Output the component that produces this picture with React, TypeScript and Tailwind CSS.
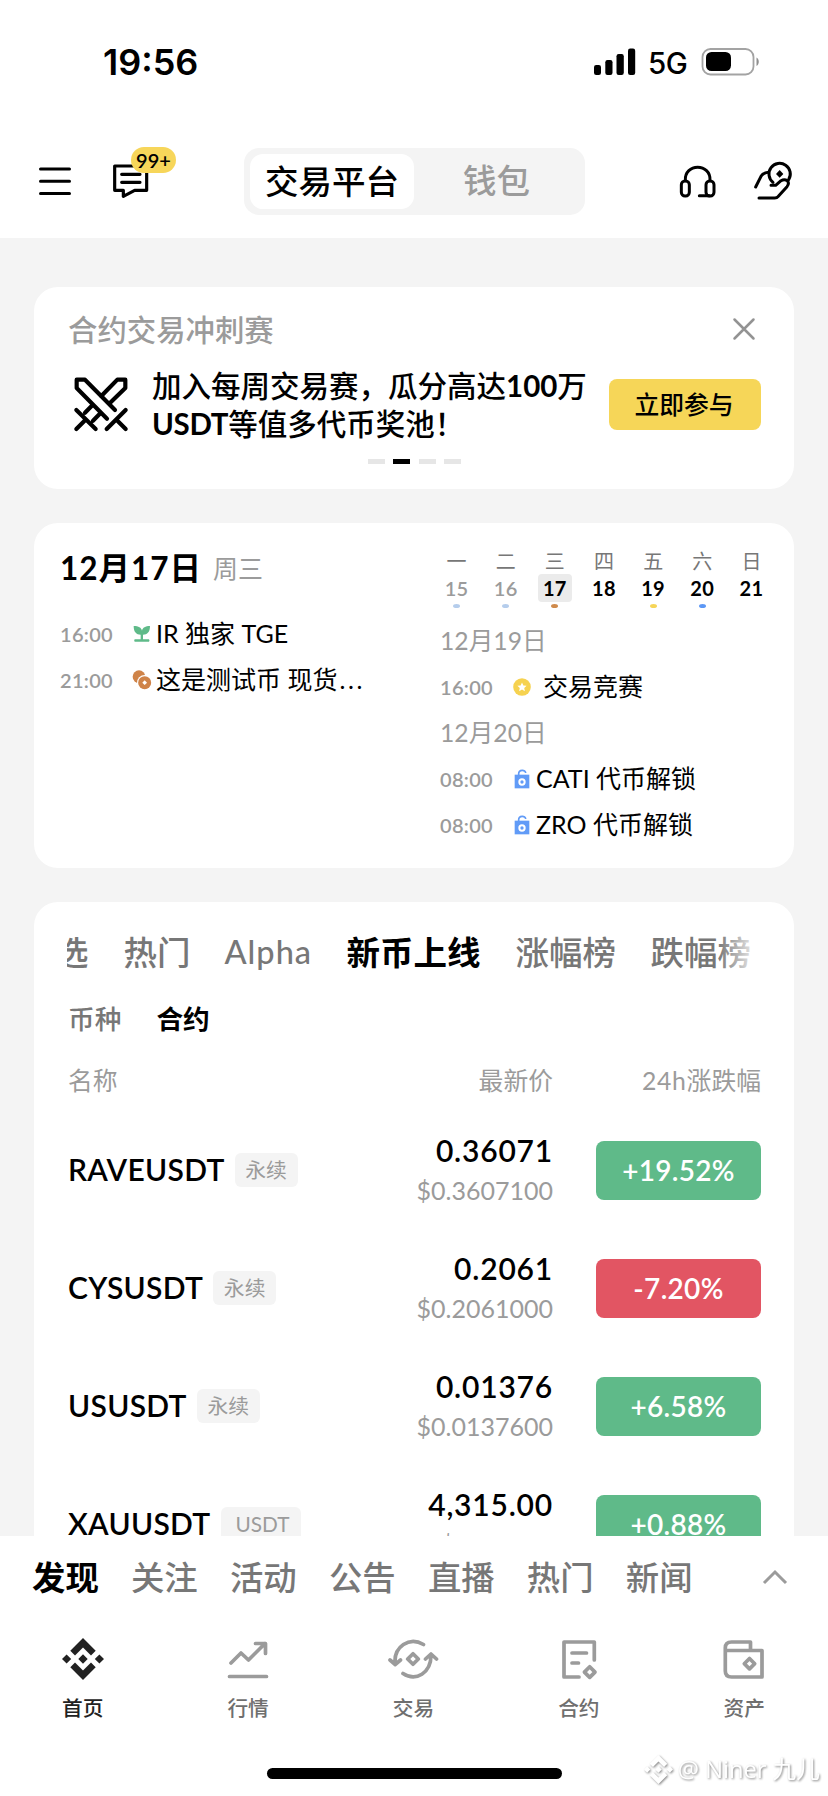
import React from "react";

const days = [
  { d: "一", n: "15", past: true, dot: "bg-[#b5cdec]" },
  { d: "二", n: "16", past: true, dot: "bg-[#b5cdec]" },
  { d: "三", n: "17", today: true, dot: "bg-[#cf8a4c]" },
  { d: "四", n: "18", dot: "bg-transparent" },
  { d: "五", n: "19", dot: "bg-[#f6d558]" },
  { d: "六", n: "20", dot: "bg-[#5c97f5]" },
  { d: "日", n: "21", dot: "bg-transparent" },
];

const pairs = [
  { name: "RAVEUSDT", tag: "永续", tagClass: "w-[63px]", price: "0.36071", usd: "$0.3607100", change: "+19.52%", up: true },
  { name: "CYSUSDT", tag: "永续", tagClass: "w-[63px]", price: "0.2061", usd: "$0.2061000", change: "-7.20%", up: false },
  { name: "USUSDT", tag: "永续", tagClass: "w-[63px]", price: "0.01376", usd: "$0.0137600", change: "+6.58%", up: true },
  { name: "XAUUSDT", tag: "USDT", tagClass: "w-[80px] pl-1", price: "4,315.00", usd: "$4,315.00", change: "+0.88%", up: true },
];

function StatusBar() {
  return (
    <div className="flex h-[124px] items-start justify-between pl-[103px] pr-[68px] pt-[42px] font-['Inter',sans-serif]">
      <span className="text-[36px] leading-[40px] font-semibold">19:56</span>
      <div className="flex items-start">
        <svg className="mt-[6px] h-[28px] w-[42px]" viewBox="0 0 42 28">
          <rect x="0" y="17" width="7" height="10" rx="2.2" />
          <rect x="11.3" y="12" width="7.2" height="15" rx="2.2" />
          <rect x="22.5" y="6" width="7.3" height="21" rx="2.2" />
          <rect x="34" y="0.5" width="7.2" height="26.5" rx="2.2" />
        </svg>
        <span className="ml-[12px] mt-[1px] w-[40px] text-[29.5px] leading-[40px] font-medium tracking-[-0.4px]">5G</span>
        <svg className="ml-[13px] mt-[5px] h-[30px] w-[59px]" viewBox="0 0 59 30">
          <rect x="1.5" y="2" width="51" height="25.5" rx="8" fill="none" stroke="#a3a3a3" strokeWidth="1.8" />
          <rect x="5" y="5" width="25" height="19" rx="5.5" />
          <path d="M55.5 10.5C58.5 12 58.5 17.5 55.5 19Z" fill="#8f8f8f" />
        </svg>
      </div>
    </div>
  );
}

function Header() {
  return (
    <header className="h-[238px] bg-white">
      <StatusBar />
      <div className="flex h-[91px] items-start pl-[39px] pt-[24px]">
        <svg className="mt-[18px] h-[30px] w-[32px]" viewBox="0 0 32 30" stroke="black" strokeWidth="3" strokeLinecap="round">
          <path d="M1.5 3H30.5M1.5 15.3H30.5M1.5 27.4H30.5" />
        </svg>
        <div className="relative ml-[41px] mt-[16px] h-[34px] w-[38px]">
          <svg className="h-[34px] w-[38px]" viewBox="336 492 114 102" fill="none" stroke="black" strokeWidth="9.5" strokeLinecap="round" strokeLinejoin="round">
            <path d="M440 510V571H404L370 589V571H344V498H400M365 523H420M365 547H420" />
          </svg>
          <span className="absolute left-[19px] top-[-17px] flex h-[26px] w-[45px] items-center justify-center rounded-full bg-[#f7d65a] text-[20px] leading-[26px] font-semibold">
            99+
          </span>
        </div>
        <div className="ml-[94px] flex h-[67px] w-[341px] items-center rounded-[15px] bg-[#f4f4f4] pl-[6px]">
          <div className="flex h-[55px] w-[164px] items-center justify-center rounded-[13px] bg-white pb-[2px] text-[33.5px] leading-[40px] font-medium">交易平台</div>
          <div className="ml-[1px] flex h-[55px] w-[163px] items-center justify-center pb-[4px] text-[33.5px] leading-[40px] font-medium text-[#9b9b9b]">钱包</div>
        </div>
        <svg className="ml-[94px] mt-[16px] h-[36px] w-[38px]" viewBox="794 492 114 108" fill="none" stroke="black" strokeWidth="9" strokeLinecap="round">
          <rect x="801" y="543" width="24" height="45" rx="11" />
          <rect x="875" y="543" width="24" height="45" rx="11" />
          <path d="M813 542C809 488 891 488 887 542M855 587H885" />
        </svg>
        <svg className="ml-[36px] mt-[13px] h-[40px] w-[40px]" viewBox="1018 484 120 120" fill="none" stroke="black" strokeWidth="9" strokeLinecap="round" strokeLinejoin="round">
          <path d="M1078 548A32 32 0 1 1 1125 540" />
          <path d="M1098 511L1109 523L1098 534L1087 523Z" fill="black" stroke="none" />
          <path d="M1026 562L1042 530Q1049 519 1065 518M1072 557H1086L1102 543Q1112 537 1121 543Q1128 551 1120 561L1094 590Q1090 595 1083 595H1036" />
        </svg>
      </div>
    </header>
  );
}

function Swords() {
  return (
    <svg className="h-[56px] w-[56px]" viewBox="160 318 168 168" fill="none" stroke="black" strokeWidth="12.5" strokeLinecap="round" strokeLinejoin="round">
      <path d="M286 420L196 329H171V354L262 446M318 420L261 477M291 450L318 477" />
      <path d="M245 378L293 329H317V354L270 400M218 406L196 428M242 430L220 452M170 420L228 477M197 450L170 477" />
    </svg>
  );
}

function Banner() {
  return (
    <section className="mt-[49px] flex h-[202px] flex-col rounded-[24px] bg-white pl-[34px] pr-[33px]">
      <div className="flex h-[86px] items-center justify-between pr-[5px]">
        <span className="text-[29.4px] leading-[40px] font-medium text-[#9b9b9b]">合约交易冲刺赛</span>
        <svg className="mb-[2px] h-[24px] w-[24px]" viewBox="0 0 24 24" stroke="#939393" strokeWidth="2.5" strokeLinecap="round">
          <path d="M2.5 2.5L21.5 21.5M21.5 2.5L2.5 21.5" />
        </svg>
      </div>
      <div className="flex h-[76px] items-start">
        <div className="ml-[5px] mt-[3px]">
          <Swords />
        </div>
        <p className="ml-[23px] mt-[-6px] w-[456px] whitespace-nowrap text-[29.5px] leading-[38px] font-medium">
          加入每周交易赛，瓜分高达<span className="font-bold">100</span>万
          <br />
          <span className="font-bold tracking-[-0.3px]">USDT</span>等值多代币奖池！
        </p>
        <button className="ml-auto mt-[6px] h-[51px] w-[152px] rounded-[8px] bg-[#f6d658] pr-[2px] text-[24.8px] leading-[50px] font-medium">立即参与</button>
      </div>
      <div className="mt-[10px] flex gap-[8.3px] pl-[300px]">
        <i className="h-[4.5px] w-[17px] bg-[#e6e6e6]" />
        <i className="h-[4.5px] w-[17px] bg-black" />
        <i className="h-[4.5px] w-[17px] bg-[#e6e6e6]" />
        <i className="h-[4.5px] w-[17px] bg-[#e6e6e6]" />
      </div>
    </section>
  );
}

function Sprout() {
  return (
    <svg className="h-[18px] w-[18px]" viewBox="337 347 54 54" fill="#5fba89">
      <path d="M339 350C354 350 362 355 364 364C366 355 374 350 388 350C388 368 380 376 367 376V390H385Q388 394 385 397H342Q339 394 342 390H360V376C347 376 339 368 339 350Z" />
    </svg>
  );
}

function Coins() {
  return (
    <svg className="h-[20px] w-[20px]" viewBox="334 485 60 60">
      <circle cx="355" cy="505" r="19" fill="#cf8348" />
      <circle cx="372" cy="523" r="23" fill="white" />
      <circle cx="372" cy="523" r="19.5" fill="#cf8348" />
      <path d="M372 516L379 523L372 530L365 523Z" fill="white" />
    </svg>
  );
}

function StarCoin() {
  return (
    <svg className="h-[18px] w-[18px]" viewBox="0 0 18 18">
      <circle cx="9" cy="9" r="8.8" fill="#f6d250" />
      <path d="M9 4.4L10.4 7.5L13.6 7.8L11.2 10L11.9 13.2L9 11.6L6.1 13.2L6.8 10L4.4 7.8L7.6 7.5Z" fill="white" />
    </svg>
  );
}

function Unlock() {
  return (
    <svg className="h-[20px] w-[16px]" viewBox="299 778 48 60">
      <path d="M313 796V792C313 779 334 779 334 790" fill="none" stroke="#619bf7" strokeWidth="5" />
      <path d="M301 795H345V836H301Z" fill="#619bf7" />
      <circle cx="323" cy="817" r="8" fill="#619bf7" stroke="white" strokeWidth="6" />
    </svg>
  );
}

function Event({ time, icon, children }: { time: string; icon: React.ReactNode; children: React.ReactNode }) {
  return (
    <div className="flex h-[46px] items-center">
      <span className="w-[72px] text-[20px] leading-[24px] font-semibold tracking-[0.3px] text-[#9b9b9b]">{time}</span>
      <span className="flex w-[20px] justify-center">{icon}</span>
      <span className="mt-[-2px] whitespace-nowrap text-[25px] leading-[34px]">{children}</span>
    </div>
  );
}

function Calendar() {
  return (
    <section className="mt-[34px] flex h-[345px] rounded-[24px] bg-white">
      <div className="w-[379px] pl-[26px] pt-[25px]">
        <div className="flex h-[40px] items-center">
          <span className="text-[31.5px] leading-[40px] font-bold tracking-[1px]">12月17日</span>
          <span className="ml-[11px] text-[25px] leading-[40px] text-[#9b9b9b]">周三</span>
        </div>
        <div className="mt-[23px] flex flex-col">
          <Event time="16:00" icon={<Sprout />}>
            <span className="ml-[4px]">IR 独家 TGE</span>
          </Event>
          <Event time="21:00" icon={<Coins />}>
            <span className="ml-[4px]">
              这是测试币 现货<span className="ml-[2px] tracking-[2.6px]">...</span>
            </span>
          </Event>
        </div>
      </div>
      <div className="flex-1 pt-[26px]">
        <div className="ml-[19px] grid w-[344px] grid-cols-7">
          {days.map((x) => (
            <div key={x.n} className="flex flex-col items-center">
              <span className="text-[20px] leading-[24px] text-[#777]">{x.d}</span>
              <span
                className={
                  "mt-[1px] flex h-[28px] w-[34px] items-center justify-center rounded-[4px] text-[20px] leading-[28px] tracking-[0.3px] " +
                  (x.past ? "font-semibold text-[#9b9b9b]" : x.today ? "bg-[#ebebeb] font-bold" : "font-bold")
                }
              >
                {x.n}
              </span>
              <i className={"mt-[2px] h-[4px] w-[7px] rounded-[50%] " + x.dot} />
            </div>
          ))}
        </div>
        <div className="mt-[10px] flex flex-col pl-[27px]">
          <div className="flex h-[46px] items-center text-[24.7px] leading-[34px] text-[#9b9b9b]">12月19日</div>
          <Event time="16:00" icon={<StarCoin />}>
            <span className="ml-[11px]">交易竞赛</span>
          </Event>
          <div className="flex h-[46px] items-center text-[24.7px] leading-[34px] text-[#9b9b9b]">12月20日</div>
          <Event time="08:00" icon={<Unlock />}>
            <span className="ml-[4px]">CATI 代币解锁</span>
          </Event>
          <Event time="08:00" icon={<Unlock />}>
            <span className="ml-[4px]">ZRO 代币解锁</span>
          </Event>
        </div>
      </div>
    </section>
  );
}

function Market() {
  return (
    <section className="mt-[34px] h-[634px] overflow-hidden rounded-t-[24px] bg-white">
      <div className="relative ml-[33px] mt-[29px] flex w-[685px] overflow-hidden whitespace-nowrap text-[33.5px] leading-[42px] font-medium text-[#777]">
        <span className="ml-[-12px] mr-[35px] shrink-0">选</span>
        <span className="w-[101px] shrink-0">热门</span>
        <span className="w-[122px] shrink-0 text-[32.5px] tracking-[1px]">Alpha</span>
        <span className="w-[169px] shrink-0 font-bold text-black">新币上线</span>
        <span className="w-[135px] shrink-0">涨幅榜</span>
        <span className="shrink-0">跌幅榜</span>
        <i className="absolute right-0 top-0 h-full w-[34px] bg-gradient-to-r from-white/0 to-white/80" />
      </div>
      <div className="mt-[29px] flex gap-[35px] pl-[34px] text-[26.7px] leading-[34px] font-medium">
        <span className="text-[#777]">币种</span>
        <span className="font-bold">合约</span>
      </div>
      <div className="mt-[29px] flex pl-[34px] pr-[33px] text-[24.8px] leading-[32px] text-[#9b9b9b]">
        <span>名称</span>
        <span className="ml-auto">最新价</span>
        <span className="w-[208px] text-right">
          <span className="tracking-[0.7px]">24h</span>涨跌幅
        </span>
      </div>
      <div className="mt-[14px]">
        {pairs.map((p) => (
          <div key={p.name} className="flex h-[118px] items-center pl-[34px] pr-[33px]">
            <span className="mt-[-3px] text-[30px] leading-[36px] font-semibold tracking-[0.3px]">{p.name}</span>
            <span className={"ml-[10px] flex h-[34px] items-center justify-center rounded-[6px] bg-[#f4f4f4] text-[20.8px] leading-[34px] text-[#9b9b9b] " + p.tagClass}>{p.tag}</span>
            <div className="ml-auto flex flex-col text-right">
              <span className="text-[30px] leading-[38px] font-semibold tracking-[0.8px]">{p.price}</span>
              <span className="mt-[2px] text-[25px] leading-[38px] text-[#9b9b9b]">{p.usd}</span>
            </div>
            <span
              className={
                "ml-[43px] flex h-[59px] w-[165px] items-center justify-center rounded-[8px] text-[28px] leading-[58px] font-semibold tracking-[0.3px] text-white " +
                (p.up ? "bg-[#5fba89]" : "bg-[#e25563]")
              }
            >
              {p.change}
            </span>
          </div>
        ))}
      </div>
    </section>
  );
}

function BinanceMark({ className }: { className: string }) {
  return (
    <svg className={className} viewBox="0 0 42 42" fill="currentColor">
      <path d="M21 0L33.7 12.8L29 17.4L21 9.4L13 17.4L8.3 12.8ZM21 42L33.7 29.2L29 24.6L21 32.6L13 24.6L8.3 29.2Z" />
      <path d="M0 21L4.6 16.4L9.2 21L4.6 25.6ZM32.8 21L37.4 16.4L42 21L37.4 25.6ZM16.3 21L21 16.3L25.7 21L21 25.7Z" />
    </svg>
  );
}

function NavItem({ label, active, children }: { label: string; active?: boolean; children: React.ReactNode }) {
  return (
    <div className={"flex w-[165.4px] flex-col items-center " + (active ? "text-[#222]" : "text-[#9b9b9b]")}>
      <div className="flex h-[48px] items-center justify-center">{children}</div>
      <span className={"mt-[10px] text-[20.7px] leading-[30px] font-medium " + (active ? "" : "text-[#6f6f6f]")}>{label}</span>
    </div>
  );
}

const line = {
  fill: "none",
  stroke: "currentColor",
  strokeWidth: 3.7,
  strokeLinecap: "round" as const,
  strokeLinejoin: "round" as const,
};

function Footer() {
  return (
    <footer className="relative h-[260px] bg-white">
      <div className="flex h-[81px] items-center gap-[32.2px] pl-[32px] pr-[40px] text-[33.4px] leading-[42px] font-medium text-[#777]">
        <span className="font-bold text-black">发现</span>
        <span>关注</span>
        <span>活动</span>
        <span>公告</span>
        <span>直播</span>
        <span>热门</span>
        <span>新闻</span>
        <svg className="ml-auto h-[18px] w-[26px]" viewBox="0 0 26 18" fill="none" stroke="#9b9b9b" strokeWidth="3">
          <path d="M2 15L13 4L24 15" />
        </svg>
      </div>
      <nav className="mt-[18px] flex">
        <NavItem label="首页" active>
          <BinanceMark className="h-[42px] w-[42px]" />
        </NavItem>
        <NavItem label="行情">
          <svg className="h-[48px] w-[48px]" viewBox="0 0 48 48" {...line}>
            <path d="M7 28L17 18L24.5 25L41 8.5M31.5 8.5H41.5V18.5M5.5 41.5H42.5" />
          </svg>
        </NavItem>
        <NavItem label="交易">
          <svg className="h-[48px] w-[52px]" viewBox="0 0 52 48" {...line}>
            <path d="M8 28C7 12 22 1 36.5 9.5M3 25L8.2 29.5L13.5 25M16 38.5C29 47 44 38 44 20M38.5 24L44 19L49.5 24M26 18.7L31.3 24L26 29.3L20.7 24Z" />
          </svg>
        </NavItem>
        <NavItem label="合约">
          <svg className="h-[48px] w-[48px]" viewBox="0 0 48 48" {...line}>
            <path d="M24 42H9V7H39.3V25M17 18H31.5M17 28H23.5M34.7 31.8L40 37.1L34.7 42.4L29.4 37.1Z" />
          </svg>
        </NavItem>
        <NavItem label="资产">
          <svg className="h-[48px] w-[48px]" viewBox="0 0 48 48" {...line}>
            <path d="M30.5 15V7H11.5Q5.3 7 5.3 13V36Q5.3 42 11.5 42H42V15.5H7M29.5 23.5L34.7 28.7L29.5 33.9L24.3 28.7Z" />
          </svg>
        </NavItem>
      </nav>
      <div className="ml-[267px] mt-[45px] h-[11px] w-[295px] rounded-full bg-black" />
      <div className="absolute bottom-[10px] right-[8px] flex items-center whitespace-nowrap text-[23.7px] leading-[34px] text-white [filter:drop-shadow(1px_1px_1px_#888)]">
        <BinanceMark className="mr-[5px] h-[29px] w-[29px]" />
        <span className="font-['Open_Sans','Noto_Sans_CJK_SC',sans-serif]">@ Niner 九儿</span>
      </div>
    </footer>
  );
}

export default function App() {
  return (
    <div className="h-[1796px] w-[828px] overflow-hidden bg-[#f4f4f4] font-['Lato','Noto_Sans_CJK_SC',sans-serif] text-black">
      <Header />
      <main className="h-[1298px] overflow-hidden px-[34px]">
        <Banner />
        <Calendar />
        <Market />
      </main>
      <Footer />
    </div>
  );
}
